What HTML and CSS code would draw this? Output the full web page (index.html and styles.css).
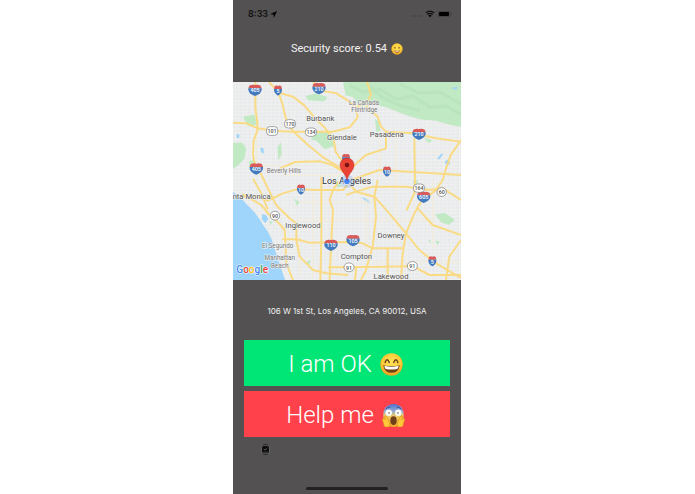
FILE: index.html
```html
<!DOCTYPE html>
<html lang="en">
<head>
<meta charset="utf-8">
<meta name="viewport" content="width=device-width, initial-scale=1">
<title>Security score</title>
<link rel="stylesheet" href="styles.css">
</head>
<body>
<main class="phone">
  <header class="status">
    <span class="clock">8:33
      <svg class="arrow" viewBox="0 0 12 12" aria-hidden="true"><path d="M12 0 L0 5.5 L6 6 L6.5 12Z"/></svg>
    </span>
    <span class="signals">
      <svg class="dots" viewBox="0 0 22 4" aria-hidden="true"><circle cx="2" cy="2" r="1.4"/><circle cx="8" cy="2" r="1.4"/><circle cx="14" cy="2" r="1.4"/><circle cx="20" cy="2" r="1.4"/></svg>
      <svg class="wifi" viewBox="0 0 27 20" aria-hidden="true"><path d="M2 7 Q13.500 -3 25 7 M6 11.500 Q13.500 5 21 11.500" fill="none" stroke="#111" stroke-width="3.400"/><path d="M9 14 Q13.500 10 18 14 L13.500 19Z"/></svg>
      <svg class="battery" viewBox="0 0 42 18" aria-hidden="true"><rect x="1" y="1" width="36" height="16" rx="5" fill="none" stroke="#333" stroke-width="1.500"/><rect x="3" y="3" width="30" height="12" rx="3"/><path d="M39 6 Q42 9 39 12Z" fill="#333"/></svg>
    </span>
  </header>

  <h1 class="score">Security score: 0.54
    <svg class="emoji-small" viewBox="0 0 36 36" role="img" aria-label="Smiling face">
      <defs><radialGradient id="face" cx=".5" cy=".4" r=".62"><stop offset="0" stop-color="#ffe45a"/><stop offset=".65" stop-color="#fdcb37"/><stop offset="1" stop-color="#e9981e"/></radialGradient></defs>
      <circle cx="18" cy="18" r="17" fill="url(#face)"/>
      <ellipse cx="12" cy="14" rx="2" ry="3" fill="#80501b"/><ellipse cx="24" cy="14" rx="2" ry="3" fill="#80501b"/>
      <path d="M8 21 Q18 25 28 21 Q25 30 18 30 Q11 30 8 21Z" fill="#945b22"/><path d="M10 22 Q18 25 26 22 L25 25 Q18 27 11 25Z" fill="#fff3cc"/>
    </svg>
  </h1>

  <svg class="map" viewBox="0 0 684 594" role="img" aria-label="Map of Los Angeles">
    <defs>
      <pattern id="streets" width="24" height="21" patternUnits="userSpaceOnUse"><path d="M0 5H24M7 0V21M0 15H24M18 0V21" stroke="#f1f2f2" stroke-width="2"/></pattern>
      <g id="shield"><path d="M-17 -13 Q-9 -18 0 -15 Q9 -18 17 -13 L20 -5 H-20Z" fill="#d85a59"/><path d="M-20 -5 H20 Q22 10 0 18 Q-22 10 -20 -5Z" fill="#4379be"/></g>
      <g id="shield-narrow"><path d="M-10 -13 Q-5 -17 0 -14 Q5 -17 10 -13 L12 -5 H-12Z" fill="#d85a59"/><path d="M-12 -5 H12 Q13 8 0 15 Q-13 8 -12 -5Z" fill="#4379be"/></g>
    </defs>
    <rect width="684" height="594" fill="#e9eaeb"/>
    <rect width="684" height="594" fill="url(#streets)"/>

    <g class="park">
      <path d="M330 0 H684 V134 L655 130 L610 116 L560 112 L510 96 L460 76 L420 66 L385 74 L360 46 L338 40Z"/>
      <path d="M218 42 L250 34 L284 46 L274 58 L225 55Z"/>
      <path d="M30 104 L64 98 L75 128 L45 132Z"/>
      <path d="M258 150 L286 148 L306 166 L304 192 L276 202 L250 176 L232 172Z"/>
      <path d="M0 182 L28 182 L40 200 L34 230 L16 250 L0 260Z"/>
      <path d="M48 238 L62 232 L60 256 L50 260Z"/>
      <path d="M134 196 L144 180 L146 216 L136 236Z"/>
      <path d="M426 110 L438 120 L442 146 L430 150Z"/>
      <path d="M606 398 L635 392 L666 414 L648 428 L626 422Z"/>
      <path d="M543 290 L555 296 L552 306 L540 302Z"/>
      <path d="M184 350 L200 360 L192 372Z"/>
      <path d="M110 416 L120 420 L110 430Z"/>
      <path d="M606 476 L620 478 L614 490Z"/><path d="M585 473 L594 476 L590 484Z"/>
      <path d="M218 540 L234 534 L228 550Z"/><path d="M572 168 L598 174 L588 184Z"/>
      <path d="M306 294 L318 300 L328 314 L312 316Z"/>
    </g>
    <path class="mountain" d="M350 10 L390 30 L440 22 L490 52 L540 42 L590 76 L640 72 L684 98 M400 6 L450 48 L500 70 L560 86 M500 6 L560 34 L620 30 L684 66"/>
    <g class="water">
      <path d="M0 330 L22 344 L40 366 L64 390 L80 412 L92 432 L104 448 L116 472 L126 504 L138 540 L156 594 H0Z"/>
      <path d="M88 396 L100 400 L106 412 L96 424 L86 410Z"/>
      <path d="M10 156 L20 158 L18 168 L12 168Z"/><path d="M82 196 L92 200 L92 216 L84 210Z"/>
      <path d="M612 230 L624 216 L632 214 L620 232Z"/><path d="M634 240 L646 232 L652 246 L642 248Z"/>
      <path d="M654 18 L674 14 L670 24Z"/><path d="M386 346 L402 350 L414 364 L400 360Z"/>
    </g>

    <g class="minor">
      <path d="M70 70 V240 M150 280 H320 M440 150 V290 M400 300 V580 M490 150 V490 M600 300 V500 M200 460 V580 M240 320 V590 M60 250 L200 250 M200 360 H430 M190 414 H600 M420 540 H684 M500 210 H684"/>
    </g>
    <g class="roads">
      <path d="M67 0 L67 80 L73 120 L73 145 L62 176 L60 220 L67 252 L84 276 L110 330 L130 370 L170 409 L190 424 L190 474 L200 524 L240 564 L280 574 L345 579"/>
      <path d="M108 0 L135 29 L148 64 L158 108 L180 147 L226 190 L270 226 L310 250 L346 284"/>
      <path d="M138 32 L180 44 L214 70 L244 106 L276 138 L302 172 L308 210 L346 262"/>
      <path d="M0 122 L40 124 L75 139 L120 146 L180 149 L300 149 L350 136 L374 106 L370 84"/>
      <path d="M240 0 L270 27 L310 34 L345 56 L370 76 L404 56 L414 38 L402 0"/>
      <path d="M396 70 L434 104 L444 134 L459 149 L539 154 L609 169 L684 179"/>
      <path d="M459 149 L459 199 L399 219 L359 254 L342 284"/>
      <path d="M544 169 L546 294 L544 334 L520 386"/>
      <path d="M684 174 L654 218 L639 260 L629 294 L609 324 L564 359 L544 394 L519 454 L509 514 L504 594"/>
      <path d="M140 260 L186 240 L260 238 L296 248 L325 266"/>
      <path d="M24 344 L66 342 L104 356 L150 334 L190 322 L260 324 L330 324 L354 294 L439 264 L529 269 L684 279"/>
      <path d="M28 336 L85 369 L110 400 L138 424 L155 444 L158 500 L160 544 L180 594"/>
      <path d="M60 290 L86 336 L104 382"/>
      <path d="M265 284 V474 L262 594 M316 300 L300 324 L290 354 L300 384 L295 474 L290 594"/>
      <path d="M148 472 L190 472 L230 482 L345 480 L389 484 L419 499 L509 499"/>
      <path d="M339 339 L369 329 L424 344 L469 394 L519 454 L559 504 L609 544 L684 588"/>
      <path d="M350 306 L369 329 L419 314 L519 314 L589 324 L629 319 L684 354"/>
      <path d="M434 294 L424 344 L429 404 L419 494 L399 564 L384 594"/>
      <path d="M554 379 L599 429 L684 459 M684 474 L649 524 L639 594 M464 499 V594"/>
      <path d="M285 556 L459 554 L539 552 L589 579 L684 579 M370 556 L366 594"/>
    </g>

    <g class="shields">
      <use href="#shield" x="66" y="24"/><text x="66" y="31">405</text>
      <use href="#shield-narrow" x="135" y="26"/><text x="135" y="33">5</text>
      <use href="#shield" x="258" y="19"/><text x="258" y="26">210</text>
      <use href="#shield" x="70" y="260"/><text x="70" y="267">405</text>
      <use href="#shield" x="558" y="156"/><text x="558" y="163">210</text>
      <use href="#shield-narrow" x="462" y="269"/><text x="462" y="276">10</text>
      <use href="#shield-narrow" x="204" y="323"/><text x="204" y="330">10</text>
      <use href="#shield-narrow" x="339" y="231"/>
      <use href="#shield" x="572" y="345"/><text x="572" y="352">605</text>
      <use href="#shield" x="294" y="489"/><text x="294" y="496">110</text>
      <use href="#shield" x="360" y="475"/><text x="360" y="482">105</text>
      <use href="#shield-narrow" x="598" y="538"/><text x="598" y="545">5</text>
    </g>
    <g class="routes">
      <rect x="101" y="134" width="33" height="26" rx="9"/><text x="117" y="153">101</text>
      <rect x="154" y="113" width="34" height="25" rx="12"/><text x="171" y="132">170</text>
      <rect x="217" y="138" width="34" height="25" rx="12"/><text x="234" y="157">134</text>
      <rect x="541" y="306" width="34" height="25" rx="12"/><text x="558" y="325">164</text>
      <rect x="612" y="317" width="28" height="26" rx="13"/><text x="626" y="337">60</text>
      <rect x="112" y="388" width="28" height="26" rx="13"/><text x="126" y="407">90</text>
      <rect x="333" y="543" width="30" height="26" rx="13"/><text x="348" y="563">91</text>
      <rect x="523" y="539" width="30" height="26" rx="13"/><text x="538" y="559">91</text>
    </g>

    <g class="places">
      <text x="262" y="118">Burbank</text>
      <text x="327" y="174">Glendale</text>
      <text x="461" y="166">Pasadena</text>
      <text x="56" y="352">nta Monica</text>
      <text x="210" y="437">Inglewood</text>
      <text x="474" y="468">Downey</text>
      <text x="370" y="532">Compton</text>
      <text x="474" y="591">Lakewood</text>
    </g>
    <g class="places suburbs">
      <text x="393" y="68">La Cañada</text>
      <text x="394" y="91">Flintridge</text>
      <text x="153" y="273">Beverly Hills</text>
      <text x="134" y="497">El Segundo</text>
      <text x="140" y="535">Manhattan</text>
      <text x="140" y="558">Beach</text>
    </g>
    <text class="downtown" x="341" y="307">Los Angeles</text>
    <circle cx="342" cy="298" r="20" fill="#4285f4" opacity=".2"/>
    <circle cx="342" cy="298" r="10" fill="#4285f4" stroke="#fff" stroke-width="2"/>
    <path d="M342 295 C340 276 321 267 321 249 A21 21 0 0 1 363 249 C363 267 344 276 342 295Z" fill="#ea4335" stroke="#c5221f" stroke-width="1.500"/>
    <circle cx="342" cy="249" r="7" fill="#781411"/>
    <text class="google" x="10" y="574"><tspan fill="#4285f4">G</tspan><tspan fill="#ea4335">o</tspan><tspan fill="#fbbc05">o</tspan><tspan fill="#4285f4">g</tspan><tspan fill="#34a853">l</tspan><tspan fill="#ea4335">e</tspan></text>
  </svg>

  <p class="address">106 W 1st St, Los Angeles, CA 90012, USA</p>

  <div class="actions">
    <button class="action ok" type="button">I am OK
      <svg class="emoji" viewBox="0 0 36 36" role="img" aria-label="Grinning face">
        <circle cx="18" cy="18" r="17.500" fill="url(#face)"/>
        <path d="M8 15 Q11 6 14.500 15 M21.500 15 Q25 6 28 15" fill="none" stroke="#69401b" stroke-width="2.200" stroke-linecap="round"/>
        <path d="M5 19 Q18 22 31 19 Q29 31 18 31 Q7 31 5 19Z" fill="#704017"/>
        <path d="M7 20 Q18 23 29 20 Q29 24 27 25 Q18 27 9 25 Q7 24 7 20Z" fill="#fff"/>
      </svg>
    </button>
    <button class="action help" type="button">Help me
      <svg class="emoji" viewBox="0 0 36 36" role="img" aria-label="Screaming face">
        <defs><linearGradient id="fear" x2="0" y2="1"><stop offset="0" stop-color="#4f72cf"/><stop offset=".3" stop-color="#91a9d5"/><stop offset=".52" stop-color="#edcd69"/><stop offset="1" stop-color="#eea823"/></linearGradient></defs>
        <path d="M18 0 C29 0 34 8 34 17 C34 28 27 36 18 36 C9 36 2 28 2 17 C2 8 7 0 18 0Z" fill="url(#fear)"/>
        <path d="M6 8 Q9 4 13 5 M23 5 Q27 4 30 8" fill="none" stroke="#3d538f" stroke-width="1.500"/>
        <circle cx="10.500" cy="13.500" r="5" fill="#fff"/><circle cx="25.500" cy="13.500" r="5" fill="#fff"/>
        <circle cx="11" cy="14" r="1.200" fill="#52402d"/><circle cx="25" cy="14" r="1.200" fill="#52402d"/>
        <ellipse cx="18" cy="26" rx="5" ry="7" fill="#70401b"/>
        <path d="M4 36 L1 26 Q0 21 3 22 L5 25 L4 19 Q6 17 8 21 L12 29 L12 36Z M32 36 L35 26 Q36 21 33 22 L31 25 L32 19 Q30 17 28 21 L24 29 L24 36Z" fill="#ffc83b" stroke="#d98c20"/>
      </svg>
    </button>
  </div>

  <footer class="bottom">
    <svg class="watch" viewBox="0 0 27 33" role="img" aria-label="Watch">
      <path d="M7 1 H20 L22 5 V28 L20 32 H7 L5 28 V5Z" fill="#242424"/>
      <rect x="2" y="5" width="23" height="23" rx="4" fill="#080808" stroke="#999" stroke-width="1.500"/>
      <path d="M8 15 L12 18 L19 12" fill="none" stroke="#888" stroke-width="2"/><path d="M6 24 H21" stroke="#555" stroke-width="2"/>
    </svg>
    <div class="home-bar"></div>
  </footer>
</main>
</body>
</html>
```
FILE: styles.css
```css
* {
  box-sizing: border-box;
}

body {
  margin: 0;
  display: grid;
  grid-template-columns: 233fr 228fr 234fr;
  min-height: 100vh;
  background: #fff;
  font-family: Inter, "Liberation Sans", sans-serif;
}

svg {
  display: block;
}

.phone {
  grid-column: 2;
  display: flex;
  flex-direction: column;
  background: #545152;
  color: #f2f2f2;
}

.status {
  display: flex;
  align-items: center;
  justify-content: space-between;
  padding: 8px 9px 0 15px;
  color: #111;
}

.clock,
.signals {
  display: flex;
  align-items: center;
  gap: 2px;
}

.clock {
  font-size: 9px;
  font-weight: 600;
  line-height: 12px;
}

.signals {
  gap: 3px;
}

.arrow {
  width: 7px;
  height: 7px;
}

.dots {
  width: 11px;
  height: 2px;
  margin-top: 4px;
  opacity: 0.3;
}

.wifi {
  width: 10px;
  height: 8px;
}

.battery {
  width: 14px;
  height: 6px;
}

.score {
  display: flex;
  align-items: center;
  justify-content: center;
  gap: 4px;
  margin: 21px 0 25px;
  font-family: Roboto, sans-serif;
  font-size: 11px;
  font-weight: 400;
  line-height: 16px;
  white-space: nowrap;
}

.emoji-small {
  width: 12px;
  height: 12px;
}

.map {
  width: 100%;
  height: auto;
  font-family: Roboto, sans-serif;
}

.park {
  fill: #c0e9c4;
}

.mountain {
  fill: none;
  stroke: #a5d9a9;
  stroke-width: 9;
  stroke-linejoin: round;
  opacity: 0.25;
}

.water {
  fill: #9fd5fa;
}

.minor,
.roads {
  fill: none;
  stroke-linejoin: round;
}

.minor {
  stroke: #f3ecd6;
  stroke-width: 3;
}

.roads {
  stroke: #fadb85;
  stroke-width: 6;
}

.shields,
.routes {
  font-size: 16px;
  font-weight: 500;
  text-anchor: middle;
}

.shields {
  fill: #fff;
}

.routes rect {
  fill: #fff;
  stroke: #777;
  stroke-width: 2;
}

.routes text {
  fill: #555;
}

.places,
.downtown {
  fill: #555;
  stroke: #f4f4f4;
  stroke-width: 3;
  paint-order: stroke;
  font-size: 23px;
  text-anchor: middle;
}

.suburbs {
  fill: #777;
  font-size: 19px;
}

.downtown {
  fill: #333;
  font-size: 27px;
}

.google {
  font-size: 30px;
  font-weight: 500;
  stroke: #fff;
  stroke-width: 3;
  paint-order: stroke;
}

.address {
  margin: 25px 0 22px;
  font-size: 8px;
  line-height: 13px;
  text-align: center;
  white-space: nowrap;
}

.actions {
  display: grid;
  gap: 5px;
  padding: 0 11px;
}

.action {
  display: flex;
  align-items: center;
  justify-content: center;
  gap: 8px;
  padding: 9px 11px 7px 8px;
  border: 0;
  color: #fff;
  font-family: Roboto, sans-serif;
  font-size: 24px;
  font-weight: 300;
  line-height: 30px;
}

.ok {
  background: #00e676;
}

.help {
  background: #ff414b;
}

.emoji {
  width: 23px;
  height: 23px;
}

.bottom {
  flex: 1;
  display: flex;
  flex-direction: column;
  justify-content: space-between;
  padding: 7px 28px 4px;
}

.watch {
  width: 9px;
  height: 11px;
}

.home-bar {
  align-self: center;
  width: 48%;
  height: 3px;
  border-radius: 2px;
  background: #222;
}
```
